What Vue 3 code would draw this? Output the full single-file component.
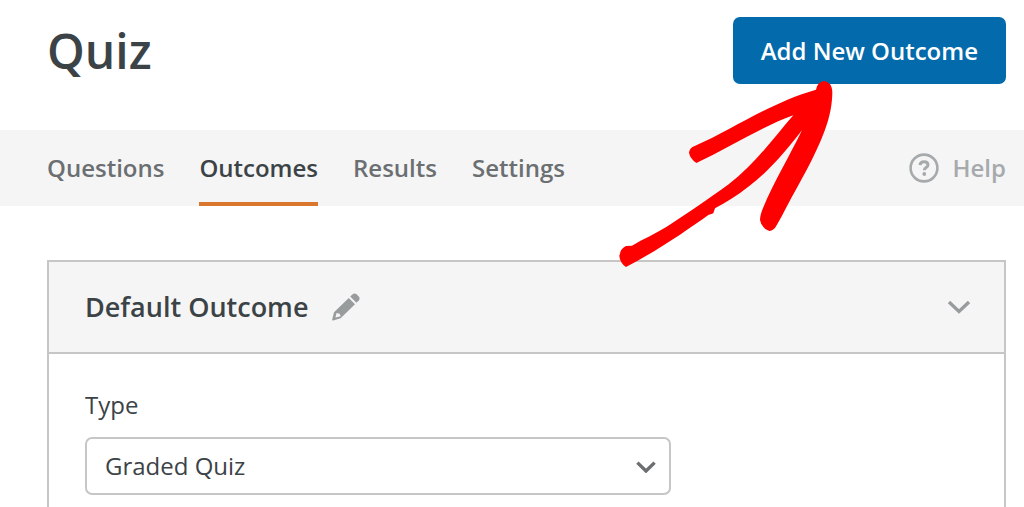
<script setup>
import { ref } from 'vue'

const tabs = ['Questions', 'Outcomes', 'Results', 'Settings']
const active = ref('Outcomes')
const type = ref('Graded Quiz')
</script>

<template>
  <main class="page">
    <header class="top">
      <h1 class="title">Quiz</h1>
      <button type="button" class="add">Add New Outcome</button>
    </header>

    <nav class="bar">
      <div class="tabs">
        <a
          v-for="tab in tabs"
          :key="tab"
          href="#"
          class="tab"
          :class="{ active: tab === active }"
          @click.prevent="active = tab"
        >{{ tab }}</a>
      </div>
      <a href="#" class="help">
        <svg class="help-icon" viewBox="0 0 30 30" aria-hidden="true">
          <circle cx="15" cy="15" r="13.4" fill="none" stroke="currentColor" stroke-width="2.6" />
          <path d="M11 12.2C11.2 9.8 12.8 8.8 15.1 8.8C17.5 8.8 19 10.1 19 12C19 14.6 15.3 14.4 15.3 17.2" fill="none" stroke="currentColor" stroke-width="3" />
          <circle cx="15.3" cy="21" r="1.9" fill="currentColor" />
        </svg>
        <span>Help</span>
      </a>
    </nav>

    <section class="card">
      <div class="card-head">
        <h2 class="card-title">Default Outcome</h2>
        <button type="button" class="icon-button" aria-label="Rename outcome">
          <svg class="pencil" viewBox="0 0 28 28" aria-hidden="true">
            <path d="M16.8 5L23 11.2L8.6 25.2L1.2 27.4Q0 27.6 .2 26.4L2 19.2Z M4.6 20L3.4 24.4L8.8 23.2L7.6 20.8Z" fill="currentColor" fill-rule="evenodd" />
            <path d="M18.2 3.6L20.6 1.3Q22.6-.3 24.6 1.3L26.8 3.5Q28.4 5.5 26.8 7.5L24.4 9.8Z" fill="currentColor" />
          </svg>
        </button>
        <button type="button" class="icon-button toggle" aria-label="Collapse outcome">
          <svg class="chevron" viewBox="0 0 24 14" aria-hidden="true">
            <path d="M2 2L12 11.4L22 2" />
          </svg>
        </button>
      </div>
      <div class="card-body">
        <label for="outcome-type" class="label">Type</label>
        <div class="select-wrap">
          <select id="outcome-type" v-model="type" class="select">
            <option>Graded Quiz</option>
          </select>
          <svg class="select-arrow" viewBox="0 0 20 12" aria-hidden="true">
            <path d="M1.4 1.6L10 10L18.6 1.6" />
          </svg>
        </div>
      </div>
    </section>

    <svg class="pointer" viewBox="57 243 642 561" aria-hidden="true">
      <path
        d="M672 243C688 246 696 256 697 275C697 310 690 350 674 392C645 470 600 545 560 620Q545 650 530 676Q522 692 508 693Q484 684 480 660Q480 645 490 622C520 550 570 465 606 391C560 450 510 512 445 560C410 588 378 606 345 625L340 640L325 645C300 664 270 682 240 704C180 742 130 775 78 801Q60 790 58 768Q62 744 78 738L96 737C130 716 165 702 200 680C260 642 330 594 386 553C465 492 520 415 580 346C480 382 385 445 289 489Q270 475 267 458Q269 443 284 438C400 388 510 308 648 269Q652 246 672 243Z"
        fill="#ff0000"
      />
    </svg>
  </main>
</template>

<style>
body {
  margin: 0;
  background: #fff;
}
</style>

<style scoped>
.page {
  position: relative;
  display: flex;
  flex-direction: column;
  min-height: 100vh;
  box-sizing: border-box;
  font-family: "Open Sans", "Noto Sans", sans-serif;
  font-size: 24px;
  line-height: 32px;
  color: #3c4347;
}

.top {
  display: flex;
  align-items: flex-start;
  justify-content: space-between;
  padding: 17px 18px 46px 47px;
}

.title {
  margin: 0;
  font-size: 48px;
  line-height: 67px;
  font-weight: 600;
}

.add {
  height: 67px;
  padding: 0 28px;
  border: 0;
  border-radius: 7px;
  background: #036aab;
  color: #fff;
  font: inherit;
  font-weight: 600;
}

.bar {
  display: flex;
  align-items: center;
  justify-content: space-between;
  height: 76px;
  padding: 0 18px 0 47px;
  background: #f5f5f5;
}

.tabs {
  display: flex;
  gap: 35px;
}

.tab {
  height: 76px;
  box-sizing: border-box;
  padding-top: 22px;
  border-bottom: 4px solid transparent;
  color: #6b6f72;
  font-weight: 600;
  text-decoration: none;
}

.tab.active {
  border-color: #d9772f;
  color: #3c4347;
}

.help {
  display: flex;
  align-items: center;
  gap: 14px;
  color: #a7aaad;
  font-weight: 600;
  text-decoration: none;
}

.help-icon {
  width: 30px;
  height: 30px;
}

.card {
  flex: 1;
  margin: 54px 18px 0 47px;
  border: 2px solid #c6c6c6;
  border-bottom: 0;
}

.card-head {
  display: flex;
  align-items: center;
  height: 90px;
  padding: 0 33px 0 36px;
  border-bottom: 2px solid #c6c6c6;
  background: #f5f5f5;
}

.card-title {
  margin: 0 24px 0 0;
  font-size: 27px;
  line-height: 40px;
  font-weight: 600;
}

.icon-button {
  display: flex;
  padding: 0;
  border: 0;
  background: none;
  color: #999c9d;
}

.toggle {
  margin-left: auto;
}

.pencil {
  width: 28px;
  height: 28px;
}

.chevron,
.select-arrow {
  fill: none;
  stroke: currentColor;
  stroke-width: 3.4;
}

.chevron {
  width: 24px;
  height: 14px;
}

.card-body {
  padding: 35px 36px 12px;
}

.label {
  display: block;
  margin-bottom: 16px;
}

.select-wrap {
  position: relative;
  width: 66.4%;
}

.select {
  width: 100%;
  height: 58px;
  box-sizing: border-box;
  padding: 0 48px 0 18px;
  border: 2px solid #c6c6c6;
  border-radius: 7px;
  appearance: none;
  background: #fff;
  color: #3c4347;
  font: inherit;
}

.select-arrow {
  position: absolute;
  top: 24px;
  right: 15px;
  width: 20px;
  height: 12px;
  color: #6b6f72;
  pointer-events: none;
}

.pointer {
  position: absolute;
  top: 81px;
  right: 191px;
  width: 214px;
  height: 187px;
  pointer-events: none;
}
</style>
